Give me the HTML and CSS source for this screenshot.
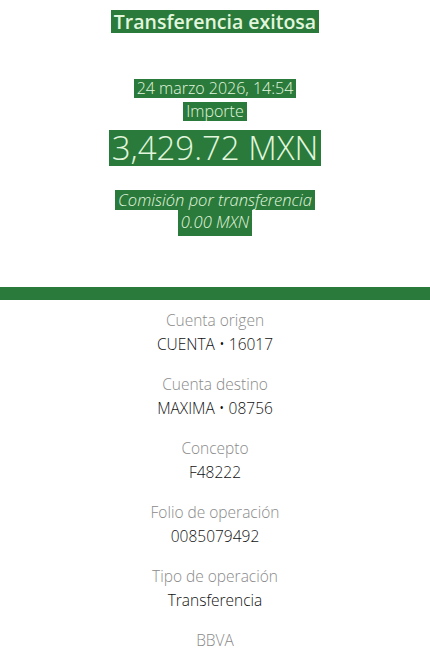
FILE: index.html
```html
<!DOCTYPE html>
<html lang="es">
<head>
    <meta charset="UTF-8">
    <meta name="viewport" content="width=device-width, initial-scale=1.0">
    <title>Transferencia exitosa</title>
    <link rel="stylesheet" href="styles.css">
</head>
<body>
    <div class="hero">
        <h1><span class="mark">Transferencia exitosa</span></h1>

        <div class="summary">
            <p class="date"><span class="mark">24 marzo 2026, 14:54</span></p>
            <p class="caption"><span class="mark">Importe</span></p>
            <p class="amount"><span class="mark">3,429.72 MXN</span></p>
            <p class="fee"><span class="mark">Comisión por transferencia</span></p>
            <p class="fee"><span class="mark">0.00 MXN</span></p>
        </div>
    </div>

    <div class="divider"></div>

    <div class="details">
        <div class="row">
            <span class="label">Cuenta origen</span>
            <span class="value">CUENTA • 16017</span>
        </div>
        <div class="row">
            <span class="label">Cuenta destino</span>
            <span class="value">MAXIMA • 08756</span>
        </div>
        <div class="row">
            <span class="label">Concepto</span>
            <span class="value">F48222</span>
        </div>
        <div class="row">
            <span class="label">Folio de operación</span>
            <span class="value">0085079492</span>
        </div>
        <div class="row">
            <span class="label">Tipo de operación</span>
            <span class="value">Transferencia</span>
        </div>
        <div class="row">
            <span class="label">BBVA</span>
        </div>
    </div>
</body>
</html>
```

FILE: styles.css
```css
body {
    font-family: "Open Sans", Arial, sans-serif;
    background-color: #fff;
    margin: 0;
    color: #1e1e1e;
}

p, h1 {
    margin: 0;
}

.hero {
    display: flex;
    flex-direction: column;
    align-items: center;
    text-align: center;
    padding-top: 10px;
}

.mark {
    display: inline-block;
    background-color: #2a7a3c;
    color: #e2f6dc;
    padding: 0 3px;
}

h1 {
    font-size: 19.5px;
    font-weight: 600;
    line-height: 23px;
}

.summary {
    display: flex;
    flex-direction: column;
    align-items: center;
    margin-top: 46px;
}

.date, .caption {
    font-size: 16px;
    font-weight: 300;
    line-height: 19px;
}

.caption {
    margin-top: 4px;
}

.amount {
    font-size: 33px;
    font-weight: 300;
    line-height: 36px;
    margin-top: 9px;
}

.fee {
    font-size: 16.5px;
    font-weight: 300;
    font-style: italic;
    line-height: 20px;
}

.amount + .fee {
    margin-top: 24px;
}

.fee + .fee .mark {
    padding-top: 2px;
    padding-bottom: 4px;
}

.divider {
    height: 13px;
    background-color: #2a7a3c;
    margin-top: 51px;
}

.details {
    display: flex;
    flex-direction: column;
    align-items: center;
    gap: 20px;
    padding-top: 10px;
}

.row {
    display: flex;
    flex-direction: column;
    align-items: center;
    gap: 4px;
    font-size: 15.5px;
    font-weight: 300;
    line-height: 20px;
}

.label {
    color: #8a8a8a;
}

.value {
    color: #111;
}
```
